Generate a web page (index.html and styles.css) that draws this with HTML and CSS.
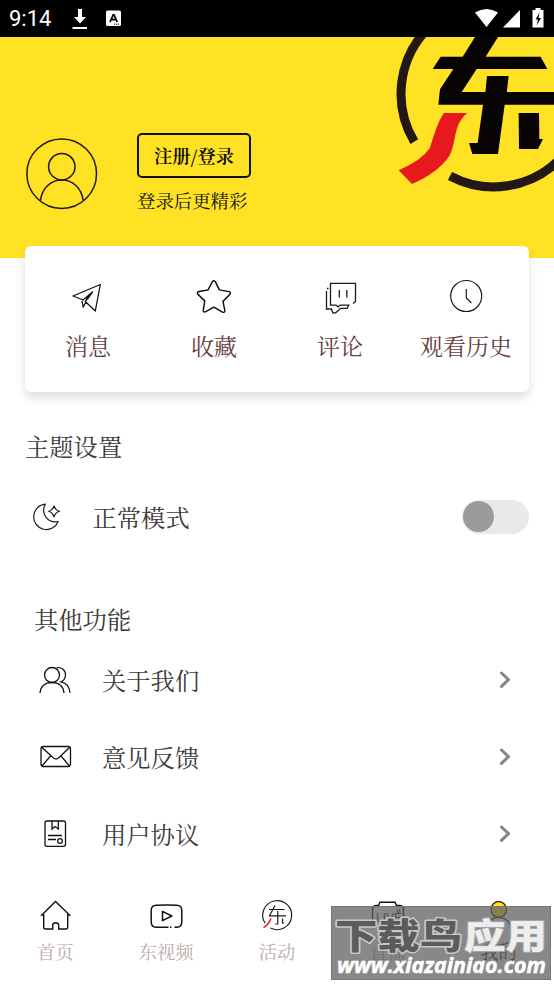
FILE: index.html
```html
<!DOCTYPE html>
<html lang="zh-CN">
<head>
<meta charset="utf-8">
<title>我的</title>
<link rel="stylesheet" href="styles.css">
</head>
<body>
<div class="screen">
  <header class="status">
    <span class="time">9:14</span>
    <svg class="status-left" width="50" height="24" viewBox="72 7 50 24"><path d="M78 9h4v8h4l-6 6.500-6-6.500h4z" fill="#fff"/><path d="M72.500 28h14.500" stroke="#fff" stroke-width="2"/><rect x="106" y="10.500" width="15" height="15.500" rx="1.500" fill="#fff"/><path d="M110 22l3.200-7h.8l3.200 7M111.500 19.700h4" fill="none" stroke="#000" stroke-width="1.800"/><path d="M114 24.200h5" stroke="#000" stroke-dasharray="1.200 .8"/></svg>
    <svg class="status-right" width="72" height="24" viewBox="474 7 72 24"><path d="M475 12.500Q486.500 5.500 498 12.500L486.500 27z" fill="#fff"/><path d="M520 10v17.500h-17z" fill="#fff"/><path d="M535.500 8h5v2h3v17.500h-11V10h3z" fill="#fff"/><path d="M539.500 12.500l-4 7h2.500l-1.500 6 4.500-7.500h-2.500z" fill="#000"/></svg>
  </header>

  <section class="hero">
    <svg class="avatar" width="74" height="74" viewBox="25 137 74 74"><g fill="none" stroke="#231815" stroke-width="1.500"><circle cx="61.700" cy="173.700" r="34.800"/><circle cx="61.800" cy="166.700" r="13.200"/><path d="M40.500 200.500C42 188 51 180 61.800 180S81.500 188 83.200 200.500"/></g></svg>
    <div class="login">
      <button class="login-btn">注册/登录</button>
      <p class="login-tip">登录后更精彩</p>
    </div>
    <svg class="brand" width="174" height="163" viewBox="0 111 522 489"><g fill="none" stroke="#231815" stroke-width="27"><path d="M103 425A279 279 0 0 1 145 84"/><path d="M210 528A279 279 0 0 0 540 477"/></g><path d="M285 111h69l-37 59h165l20 37H290l-45 69h277v38H374l-20 148h-77l-10-33h26l16-115H175l5-46 40-61h-62l24-37h66zM321 228h65l-7 60h-64zM416 339h61l1 78h11l-15 30h-57z" fill="#080403"/><path d="M192 339h70C218 374 230 430 208 468Q174 518 96 552L56 511Q124 482 149 445C161 410 174 363 192 339z" fill="#e8191c"/></svg>
  </section>

  <nav class="card">
    <a class="shortcut"><svg width="36" height="36" viewBox="70 279 36 36"><g fill="none" stroke="#111" stroke-width="1.300" stroke-linejoin="round"><path d="M73 296l27.300-11.500L95.300 311l-10-9.500L92.500 292l-9.500 8zM82 301l1.200 6 2.800-5M86 298.500l6.500-6.500-5 7"/></g></svg><span>消息</span></a>
    <a class="shortcut"><svg width="36" height="36" viewBox="195.500 278.500 37 37"><path d="M212.300 281.300q1.700-2 3.200.2l4 8.200 10 1.800q2.300.8.700 3l-7 7 2 9.500q-.2 2.500-2.500 1.500L214 307.500l-9 4.800q-2.300.6-2-1.800l1.500-9.500-7-6.700q-1.500-2.200.8-2.900l9.500-1.500z" fill="none" stroke="#111" stroke-width="1.500" stroke-linejoin="round"/></svg><span>收藏</span></a>
    <a class="shortcut"><svg width="36" height="36" viewBox="322 279 36 36"><g fill="none" stroke="#231815" stroke-width="1.300"><path d="M353 303.500l2.500-2V283.300h-25v21.800h5.500l2.200 1.700 2-1.700h8.500l-1.500 3.200h-6.500l-5 4.500h-3l-1.200-3.800H326.500V291M327 288.500h1.500M339.300 290v7.500M346.800 290v7.500"/></g></svg><span>评论</span></a>
    <a class="shortcut"><svg width="36" height="36" viewBox="448 279 36 36"><g fill="none" stroke="#231815" stroke-width="1.200"><circle cx="466.200" cy="296" r="15.500"/><path d="M466.300 289v9l5 5"/></g></svg><span>观看历史</span></a>
  </nav>

  <section class="theme">
    <h2>主题设置</h2>
    <div class="theme-row">
      <svg width="36" height="36" viewBox="27.500 499 36 36"><g fill="none" stroke="#231815" stroke-width="1.200" stroke-linejoin="round"><path d="M44.800 504.200A12.700 12.700 0 1 0 57.700 521.500C48 523.500 39.500 514 44.800 504.200zM53.500 506q1 4 5.500 5.300-4.500 1.500-5.500 5.500-1-4-5.300-5.500 4.300-1.300 5.300-5.300z"/></g></svg>
      <span>正常模式</span>
      <div class="switch"><i class="knob"></i></div>
    </div>
  </section>

  <section class="more">
    <h2>其他功能</h2>
    <a class="row"><svg width="36" height="36" viewBox="37 662 36 36"><g fill="none" stroke="#111" stroke-width="1.300"><circle cx="52" cy="675" r="7.500"/><path d="M40 693c.5-6.500 5-10.500 12-10.500s11.500 4 12 10.500M56.500 667.800c4.500-1 9 2 9 7 0 4.500-2 6-4.500 7 5 1 8.500 4.500 9 11"/></g></svg><span>关于我们</span><svg class="chevron" width="14" height="20" viewBox="498 670 14 20"><path d="M501.500 673l7 6.700-7 6.700"/></svg></a>
    <a class="row"><svg width="36" height="36" viewBox="37 739 36 36"><g fill="none" stroke="#111" stroke-width="1.300"><rect x="41" y="746.500" width="29.500" height="20" rx="2.500"/><path d="M42 747.500l11.500 10.500q2.500 2 5 0L69.500 747.500M42 766l8.500-10M69.500 766l-8.500-10"/></g></svg><span>意见反馈</span><svg class="chevron" width="14" height="20" viewBox="498 670 14 20"><path d="M501.500 673l7 6.700-7 6.700"/></svg></a>
    <a class="row"><svg width="36" height="36" viewBox="37 816 36 36"><g fill="none" stroke="#111" stroke-width="1.300"><rect x="45" y="821" width="20.500" height="25.300" rx="2"/><path d="M52 821v8l3-2.500 3.300 2.500v-8M48 835.500h14M48 839.500h8"/><circle cx="60" cy="841" r="2.300"/></g></svg><span>用户协议</span><svg class="chevron" width="14" height="20" viewBox="498 670 14 20"><path d="M501.500 673l7 6.700-7 6.700"/></svg></a>
  </section>

  <footer class="tabs">
    <a class="tab"><svg width="36" height="36" viewBox="37 897 36 36"><path d="M41.800 915L55.500 901.500 69.500 915h-1.800v12q0 2-2 2h-7v-4q-.5-2.200-3-2.200t-3 2.200v4h-7q-2 0-2-2V915z" fill="none" stroke="#111" stroke-width="1.400"/></svg><span>首页</span></a>
    <a class="tab"><svg width="36" height="36" viewBox="148 897 36 36"><g fill="none" stroke="#111" stroke-width="1.500" stroke-linejoin="round"><path d="M168.500 927.200H156q-4.500-.2-4.800-5V910q.3-4.500 4.800-4.700 10.300-.8 21 0 4.500.2 4.800 4.700v12.200q-.3 4.800-4.800 5h-2.500M170 927.200h1.500M162.500 911.300v9.400l9.300-4.700z"/></g></svg><span>东视频</span></a>
    <a class="tab"><svg width="36" height="36" viewBox="259 897 36 36"><g fill="none" stroke="#231815" stroke-width="1.200"><path d="M265 923A14.500 14.500 0 1 1 270.500 928"/><path d="M269 909.500h15.500M275 905.500l-5.500 10.300h16.500M277.800 911v13h-2.500M282.500 918.500v4.500h1.800"/></g><path d="M271 918.500c-2 4-3 7-7.500 9" fill="none" stroke="#e8191c" stroke-width="1.500"/></svg><span>活动</span></a>
    <a class="tab"><svg width="36" height="36" viewBox="370 897 36 36"><g fill="none" stroke="#111" stroke-width="1.500"><path d="M378.500 905.500l1.500-3.300h15l1.500 3.300h3q4 0 4 4v13q0 4-4 4h-23q-4 0-4-4v-13q0-4 4-4z"/><circle cx="398.500" cy="911" r="1.500" stroke-width="1"/></g><text class="live" x="376" y="921.500">LIVE</text></svg><span>直播</span></a>
    <a class="tab active"><svg width="36" height="54" viewBox="481 897 36 54"><circle cx="498.700" cy="909.500" r="7.800" fill="#ffe222" stroke="#231815" stroke-width="1.200"/><path d="M487 942l-1.500-13c1-7 6-11.500 13-11.500s12 4.500 13 11.500l-1.500 13q-11 6-23 0z" fill="none" stroke="#231815" stroke-width="1.200"/></svg><span>我的</span></a>
  </footer>
  <svg class="watermark" width="220" height="75" viewBox="331 906 220 75"><rect x="331.500" y="906.500" width="219" height="73" class="wm-box"/><text x="335" y="948.500" textLength="127" lengthAdjust="spacingAndGlyphs" class="wm-name wm-dark">下载鸟</text><text x="464" y="948.500" textLength="83" lengthAdjust="spacingAndGlyphs" class="wm-name wm-light">应用</text><text x="337" y="973" textLength="209" lengthAdjust="spacingAndGlyphs" class="wm-url">www.xiazainiao.com</text></svg>
</div>
</body>
</html>
```
FILE: styles.css
```css
* { box-sizing: border-box; }
body { margin: 0; background: #fff; }
.screen {
  position: relative;
  width: 554px;
  height: 984px;
  overflow: hidden;
  background: #fff;
  color: #3e3a39;
  font-family: "Noto Serif CJK SC", "Noto Serif SC", "Source Han Serif SC", "Noto Sans CJK SC", serif;
}
svg { display: block; flex: none; }
h2, p { margin: 0; font-weight: 400; }

.status { display: flex; align-items: center; height: 37px; padding: 0 8px 0 9px; background: #000; }
.time { width: 63px; color: #fff; font: 22px/37px Roboto, sans-serif; }
.status-right { margin-left: auto; }

.hero { display: flex; height: 221px; padding-left: 25px; background: #ffe223; }
.avatar { margin-top: 100px; }
.login { width: 160px; margin: 96px 0 0 38px; }
.login-btn {
  display: block;
  width: 114px;
  height: 45px;
  padding: 0 0 2px;
  border: 2px solid #111;
  border-radius: 5px;
  background: none;
  color: #000;
  font: 600 18.300px/38px "Noto Serif CJK SC", "Noto Sans CJK SC", serif;
}
.login-tip { margin-top: 8px; color: #111; font-size: 18.400px; line-height: 28px; white-space: nowrap; }
.brand { margin-left: auto; }

.card {
  position: relative;
  display: grid;
  grid-template-columns: repeat(4, 126px);
  height: 146px;
  margin: -12px 25px 0;
  padding-top: 33px;
  border-radius: 6px;
  background: #fff;
  box-shadow: 0 6px 10px rgba(0, 0, 0, .13);
}
.shortcut { display: flex; flex-direction: column; align-items: center; color: #654142; font-size: 23px; line-height: 34px; white-space: nowrap; }
.shortcut span { margin-top: 14px; }

h2 { font-size: 24.300px; line-height: 40px; }
.theme { padding: 34px 25px 0; }
.theme-row { display: flex; align-items: center; height: 60px; margin-top: 21px; padding-left: 3px; font-size: 24.300px; }
.theme-row span { margin: -2px 0 0 28.500px; }
.switch { width: 67px; height: 34px; margin-left: auto; padding: 1px; border-radius: 17px; background: #e9e9e9; }
.knob { display: block; width: 31px; height: 31px; border-radius: 50%; background: #9b9b9b; }

.more { padding: 52px 42px 0 34px; }
.row { display: flex; align-items: center; height: 77px; padding-left: 3px; font-size: 24.300px; }
.more h2 { margin-bottom: 2px; }
.row span { margin-left: 29px; }
.chevron { margin-left: auto; fill: none; stroke: #898585; stroke-width: 3; stroke-linecap: round; stroke-linejoin: round; }

.tabs { display: grid; grid-template-columns: repeat(5, 20%); margin-top: 25px; }
.tab { display: flex; flex-direction: column; align-items: center; height: 87px; color: #baaaaa; font-size: 18.300px; line-height: 28px; }
.tab span { margin-top: 4px; }
.tab.active { color: #231815; }
.tab.active span { margin-top: -14px; }
.live { font: 12px "Liberation Sans", sans-serif; fill: #222; }

.watermark { position: absolute; left: 331px; top: 906px; }
.wm-box { fill: rgba(95, 95, 95, .74); stroke: #777; }
.wm-name { font: 900 35px "Noto Sans CJK SC", sans-serif; paint-order: stroke; stroke-linejoin: round; opacity: .86; }
.wm-dark { fill: #555; stroke: #d2d2d2; stroke-width: 3; }
.wm-light { fill: #fff; stroke: #aaa; stroke-width: 2; }
.wm-url { font: italic 700 21px "Open Sans", "Liberation Sans", sans-serif; fill: #fff; stroke: #fff; stroke-width: .5; }
```
